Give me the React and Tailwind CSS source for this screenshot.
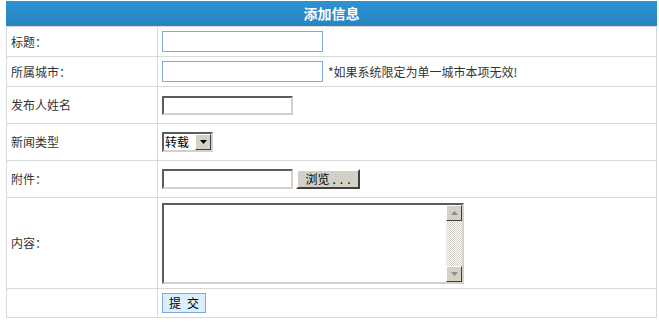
import React from "react";

const font = { fontFamily: '"Noto Sans CJK SC", "Liberation Sans", sans-serif' };

function Inset({ className = "", children }) {
  return (
    <div
      className={`box-border border-2 border-t-[#5c5c5c] border-l-[#5c5c5c] border-b-[#d4d0c8] border-r-[#d4d0c8] bg-white ${className}`}
    >
      {children}
    </div>
  );
}

function Row({ label, h, children }) {
  return (
    <div className={`flex border-t border-[#d9d9d9] ${h}`}>
      <div className="w-[150px] flex items-center pl-[4px] text-[12px] text-[#333]">{label}</div>
      <div className="w-px bg-[#d9d9d9]" />
      <div className="flex-1 flex items-center pl-[4px]">{children}</div>
    </div>
  );
}

function Tri({ up }) {
  return (
    <svg width="7" height="4" viewBox="0 0 7 4">
      {up ? <polygon points="0,4 7,4 3.5,0" fill="#8a8a8a" /> : <polygon points="0,0 7,0 3.5,4" fill="#8a8a8a" />}
    </svg>
  );
}

function ScrollBtn({ up }) {
  return (
    <div className="w-[16px] h-[16px] box-border bg-[#d4d0c8] border border-t-white border-l-white border-b-[#404040] border-r-[#404040] flex items-center justify-center">
      <Tri up={up} />
    </div>
  );
}

export default function App() {
  return (
    <div className="w-[659px] h-[324px] bg-white" style={font}>
      <div className="ml-[6px] pt-[1px] w-[651px]">
        <div className="h-[25px] bg-gradient-to-b from-[#2b93d4] to-[#2884bf] flex items-center justify-center text-white font-bold text-[14px]">
          添加信息
        </div>
        <div className="border-l border-r border-b border-[#d9d9d9]">
          <Row label="标题：" h="h-[30px]">
            <div className="w-[161px] h-[21px] box-border border border-[#7fa9dc] bg-white" />
          </Row>
          <Row label="所属城市：" h="h-[30px]">
            <div className="w-[161px] h-[21px] box-border border border-[#7fa9dc] bg-white" />
            <span className="ml-[5px] text-[12px] text-[#333]">*如果系统限定为单一城市本项无效!</span>
          </Row>
          <Row label="发布人姓名" h="h-[37px]">
            <Inset className="w-[131px] h-[19px]" />
          </Row>
          <Row label="新闻类型" h="h-[37px]">
            <Inset className="w-[51px] h-[20px] flex items-center">
              <span className="text-[12px] text-black leading-none pl-px flex-1">转载</span>
              <div className="w-[16px] h-[16px] box-border bg-[#d4d0c8] border border-t-white border-l-white border-b-[#404040] border-r-[#404040] flex items-center justify-center">
                <svg width="7" height="4" viewBox="0 0 7 4">
                  <polygon points="0,0 7,0 3.5,4" fill="#000" />
                </svg>
              </div>
            </Inset>
          </Row>
          <Row label="附件：" h="h-[37px]">
            <Inset className="w-[131px] h-[20px]" />
            <div className="ml-[3px] w-[64px] h-[20px] box-border bg-[#d4d0c8] border-2 border-t-white border-l-white border-b-[#404040] border-r-[#404040] flex items-center justify-center text-[12px] text-black">
              <span>浏览</span>
              <span className="tracking-[4px] ml-[3px] -mr-[4px]">...</span>
            </div>
          </Row>
          <Row label="内容：" h="h-[91px]">
            <Inset className="w-[302px] h-[81px] flex justify-end">
              <div className="w-[16px] h-full flex flex-col">
                <ScrollBtn up />
                <div className="flex-1 bg-[repeating-conic-gradient(#d4d0c8_0_25%,#ffffff_0_50%)] bg-[length:2px_2px]" />
                <ScrollBtn />
              </div>
            </Inset>
          </Row>
          <Row label="" h="h-[29px]">
            <div className="w-[44px] h-[20px] box-border border border-[#7fa9dc] bg-[#dcefff] flex items-center justify-center gap-[6px] text-[12px] text-black">
              <span>提</span>
              <span>交</span>
            </div>
          </Row>
        </div>
      </div>
    </div>
  );
}
